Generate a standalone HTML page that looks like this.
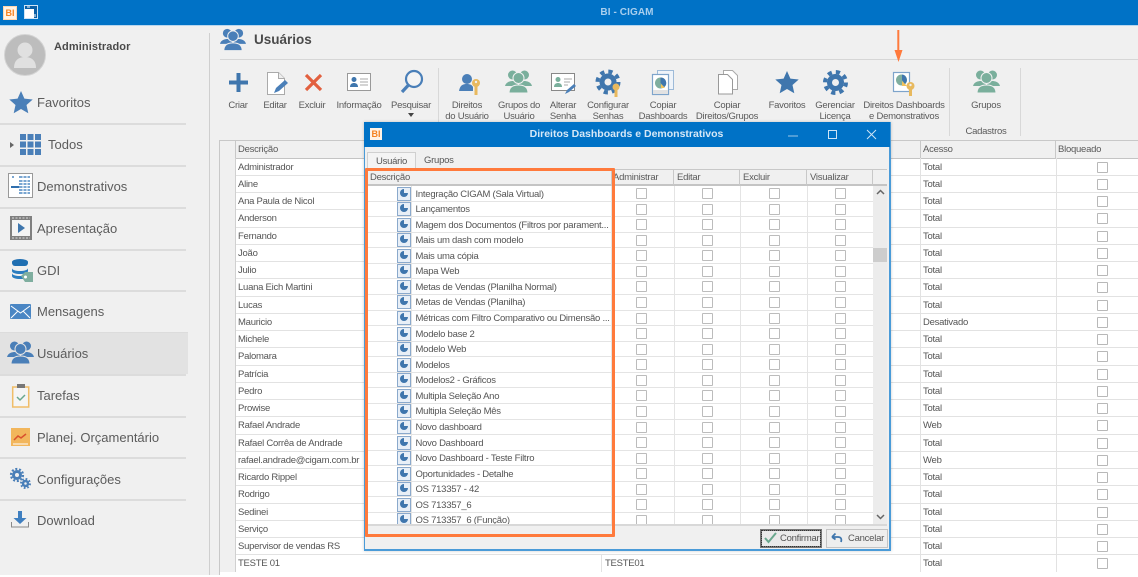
<!DOCTYPE html>
<html><head><meta charset="utf-8"><title>BI - CIGAM</title>
<style>
html,body{margin:0;padding:0;background:#fff;}
#p{position:relative;width:1138px;height:577px;overflow:hidden;background:#fff;font-family:"Liberation Sans",sans-serif;color:#555;filter:blur(.35px);}
#p div,#p span{position:absolute;white-space:nowrap;}
svg{position:absolute;overflow:visible;}
.nav{left:37px;margin-top:1px;font-size:13px;color:#5c5c5c;line-height:18px;}
.sep{left:0;width:186px;height:2px;background:#dcdcdc;}
.tb{margin-top:2px;font-size:9.5px;letter-spacing:-.25px;line-height:10.5px;text-align:center;width:110px;color:#5a5a5a;white-space:normal !important;}
.vs{width:1px;background:#d8d8d8;top:68px;height:68px;}
.r{left:220px;width:918px;height:17.25px;background:#fff;border-bottom:1px solid #e2e2e2;box-sizing:border-box;font-size:9.5px;letter-spacing:-.25px;line-height:16px;color:#555;}
.r .a{left:18px;top:1px;}.r .c{left:703px;top:1px;}.r .x{left:381px;top:-1px;width:0;height:18px;border-left:1px solid #e2e2e2;}
.r .y{left:836px;top:-1px;width:0;height:18px;border-left:1px solid #e2e2e2;}.r .w{left:700px;top:-1px;width:0;height:18px;border-left:1px solid #e2e2e2;}
.r .z{left:0;top:-1px;width:15px;height:18px;background:#f0f0f0;border-right:1px solid #d0d0d0;}
.r i{position:absolute;left:877px;top:3px;width:9px;height:9px;border:1px solid #b8b8b8;border-radius:1px;background:#fff;}
.h{top:141px;height:17px;background:#f0f0f0;border-right:1px solid #c8c8c8;border-bottom:2px solid #c4c4c4;box-sizing:content-box;font-size:9.5px;letter-spacing:-.25px;line-height:18px;color:#5a5a5a;text-indent:2px;}
.dh{top:169px;height:15px;background:#f0f0f0;border-right:1px solid #c8c8c8;border-bottom:2px solid #c4c4c4;font-size:9.5px;letter-spacing:-.25px;line-height:16px;color:#5a5a5a;text-indent:3px;}
.dr{left:0;width:506px;height:15.57px;background:#fff;border-bottom:1px solid #e4e4e4;box-sizing:border-box;font-size:9.5px;letter-spacing:-.25px;line-height:14.5px;color:#555;}
.dr b{position:absolute;font-weight:normal;left:48.5px;top:1.5px;white-space:nowrap;}
.dr u{position:absolute;left:30px;top:.5px;width:12px;height:12px;background:#e8eff7;border:1px solid #8aa9cc;text-decoration:none;}
.dr u:before{content:"";position:absolute;left:2px;top:1px;width:8px;height:8px;border-radius:50%;background:#3f76ad;}
.dr u:after{content:"";position:absolute;left:6px;top:1px;width:4px;height:4px;background:#e8eff7;}
.dr s{position:absolute;top:2px;width:9px;height:9px;border:1px solid #bcbcbc;border-radius:1px;background:#fff;}
.dr em{position:absolute;top:0;height:16px;width:1px;background:#e4e4e4;}
</style></head><body>
<div id="p">
<div style="left:0;top:0;width:1138px;height:575px;background:#f0f0f0"></div>
<div style="left:0;top:0;width:1138px;height:25px;background:#0072c6"></div>
<div style="left:0;top:25px;width:1138px;height:1px;background:#b8d6ee"></div>
<div style="left:0;top:4px;width:1254px;text-align:center;color:#a9cfee;font-size:10px;font-weight:bold;line-height:18px;letter-spacing:.1px">BI - CIGAM</div>

<div style="left:3px;top:6px;width:12px;height:12px;background:#fff3e6;border:1px solid #ffd7b0;color:#f58220;font:bold 9px/12px 'Liberation Sans';text-align:center">BI</div>
<svg style="left:24px;top:5px" width="14" height="14"><rect width="13" height="13" fill="#0a5fa5" stroke="#cfe4f5" stroke-width="1" x=".5" y=".5"/><rect x="1" y="4" width="9" height="9" fill="#fff"/><path d="M3 2h3M11 9v3" stroke="#fff"/></svg>

<!-- sidebar -->
<div style="left:209px;top:33px;width:1px;height:542px;background:#cfcfcf"></div>
<svg style="left:4px;top:34px" width="43" height="42"><circle cx="21" cy="21" r="20.5" fill="#bdbdbd" stroke="#d4d4d4"/><circle cx="21" cy="16" r="7.5" fill="#e0e0e0"/><path d="M10 34c0-8 5-11 11-11s11 3 11 11z" fill="#e0e0e0"/></svg>
<div style="left:54px;top:40px;font-size:11px;font-weight:bold;color:#4a4a4a;line-height:15px;letter-spacing:.1px">Administrador</div>

<svg style="left:9px;top:91px" width="24" height="23"><path d="M12 0l3.4 7.6 8.3.9-6.2 5.5 1.800 8.200L12 18l-7.300 4.200 1.800-8.200L.3 8.500l8.300-.9z" fill="#4a7fb8"/></svg>
<div class="nav" style="top:93px">Favoritos</div>
<div class="sep" style="top:123px"></div>
<svg style="left:9px;top:141px" width="6" height="8"><path d="M1 1l4 3-4 3z" fill="#666"/></svg>
<svg style="left:20px;top:134px" width="22" height="21" fill="#4a7fb8"><rect width="6" height="6"/><rect x="7.5" width="6" height="6"/><rect x="15" width="6" height="6"/><rect y="7.5" width="6" height="6"/><rect x="7.5" y="7.5" width="6" height="6"/><rect x="15" y="7.5" width="6" height="6"/><rect y="15" width="6" height="6"/><rect x="7.5" y="15" width="6" height="6"/><rect x="15" y="15" width="6" height="6"/></svg>
<div class="nav" style="left:48px;top:135px">Todos</div>
<div class="sep" style="top:165px"></div>
<svg style="left:8px;top:173px" width="25" height="26"><rect x=".5" y=".5" width="24" height="24" fill="#fff" stroke="#999"/><path d="M5 3v2M11 4h11M11 8h11M11 11h11M3 14h19M11 17h11M11 20h11" stroke="#7aa6d1" stroke-width="2"/><path d="M15 3v18M19 3v18" stroke="#fff"/><path d="M3 14h8" stroke="#2f6fae" stroke-width="2"/></svg>
<div class="nav" style="top:177px">Demonstrativos</div>
<div class="sep" style="top:207px"></div>
<svg style="left:10px;top:216px" width="23" height="25"><rect x="0" y="0" width="22" height="24" fill="#808080"/><rect x="2" y="4" width="18" height="16" fill="#f4f4f4"/><path d="M2 2h18M2 22h18" stroke="#ddd" stroke-dasharray="2 1.5"/><path d="M8 7l7 5-7 5z" fill="#3f76ad"/></svg>
<div class="nav" style="left:37px;top:219px">Apresentação</div>
<div class="sep" style="top:249px"></div>
<svg style="left:12px;top:259px" width="22" height="24"><rect y="1" width="16" height="6" rx="3" fill="#1f6fb2"/><ellipse cx="8" cy="3" rx="8" ry="3" fill="#1f6fb2"/><path d="M0 9c0 2 4 3 8 3s8-1 8-3v3c0 2-4 3-8 3s-8-1-8-3z" fill="#2b7dbf"/><path d="M0 14c0 2 4 3 8 3 2 0 3 0 4-1v4H8c-4 0-8-1-8-3z" fill="#2b7dbf"/><path d="M9 17l4-4h8v10h-8z" fill="#7fae9f"/><circle cx="13.5" cy="18" r="1.5" fill="#fff"/></svg>
<div class="nav" style="top:261px">GDI</div>
<div class="sep" style="top:290px"></div>
<svg style="left:10px;top:304px" width="21" height="15"><rect width="21" height="15" rx="1" fill="#4a86c4"/><path d="M1 2l9.500 7L20 2M1 14l7-7M20 14l-7-7" stroke="#fff" fill="none"/></svg>
<div class="nav" style="top:302px">Mensagens</div>
<div class="sep" style="top:332px;width:188px"></div>
<div style="left:0;top:333px;width:188px;height:41px;background:#e2e2e2"></div>
<svg style="left:7px;top:341px" width="27" height="23" viewBox="0 0 27 23" fill="#4a7fb8"><circle cx="7.500" cy="5" r="4.500"/><circle cx="19.500" cy="5" r="4.500"/><path d="M0 16c1-4 5-5 8-5 3 0 5 2 5 5zM27 16c-1-4-5-5-8-5-3 0-5 2-5 5z"/><circle cx="13.500" cy="8" r="5.500" stroke="#e2e2e2"/><path d="M4 23c0-6 4-8 9.500-8S23 17 23 23z" stroke="#e2e2e2"/></svg>
<div class="nav" style="top:344px">Usuários</div>
<div class="sep" style="top:374px"></div>
<svg style="left:12px;top:384px" width="18" height="24"><rect x=".7" y="3" width="16" height="20" fill="#f5f5f5" stroke="#f0bd68" stroke-width="1.500"/><rect x="5" y="0" width="8" height="4" fill="#777"/><path d="M5 13l3 3 5-5" stroke="#6aa88e" stroke-width="1.500" fill="none"/></svg>
<div class="nav" style="top:386px">Tarefas</div>
<div class="sep" style="top:416px"></div>
<svg style="left:11px;top:428px" width="19" height="18"><rect width="19" height="18" fill="#f2b65c"/><path d="M2 16h15" stroke="#fff"/><path d="M3 12l4-4 3 2 5-4" stroke="#d9502e" stroke-width="1.500" fill="none"/></svg>
<div class="nav" style="top:428px">Planej. Orçamentário</div>
<div class="sep" style="top:457px"></div>
<svg style="left:10px;top:468px" width="21" height="21"><g fill="none" stroke="#4a7fb8"><circle cx="7" cy="7" r="3.500" stroke-width="3"/><circle cx="7" cy="7" r="6" stroke-width="2.200" stroke-dasharray="2 1.770"/><circle cx="15.500" cy="15.500" r="2.500" stroke-width="2.500"/><circle cx="15.500" cy="15.500" r="4.500" stroke-width="2" stroke-dasharray="1.700 1.830"/></g></svg>
<div class="nav" style="top:470px">Configurações</div>
<div class="sep" style="top:499px"></div>
<svg style="left:11px;top:511px" width="18" height="17"><path d="M7 0h4v7h4.500L9 13 2.500 7H7z" fill="#3f7fc0"/><path d="M.5 11v5h17v-5" stroke="#8a8a8a" fill="none"/></svg>
<div class="nav" style="top:511px">Download</div>

<!-- header -->
<svg style="left:220px;top:28px" width="26" height="23" viewBox="0 0 27 23" fill="#4a7fb8"><circle cx="7.500" cy="5" r="4.500"/><circle cx="19.500" cy="5" r="4.500"/><path d="M0 16c1-4 5-5 8-5 3 0 5 2 5 5zM27 16c-1-4-5-5-8-5-3 0-5 2-5 5z"/><circle cx="13.500" cy="8" r="5.500" stroke="#f0f0f0"/><path d="M4 23c0-6 4-8 9.500-8S23 17 23 23z" stroke="#f0f0f0"/></svg>
<div style="left:254px;top:31px;font-size:13.5px;font-weight:bold;color:#4a4a4a;line-height:18px">Usuários</div>
<div style="left:220px;top:59px;width:918px;height:1px;background:#d6d6d6"></div>

<!-- toolbar icons -->
<svg style="left:229px;top:73px" width="19" height="19"><path d="M7.500 0h4v7.500H19v4h-7.500V19h-4v-7.500H0v-4h7.500z" fill="#3f76ad"/></svg>
<svg style="left:267px;top:72px" width="22" height="24"><path d="M.5.500h11l6 6v16H.5z" fill="#fff" stroke="#aaa"/><path d="M11.500.500v6h6" fill="#eee" stroke="#aaa"/><path d="M7 21l2-5 9-8 3 3-9 8z" fill="#4a7fb8"/></svg>
<svg style="left:304px;top:73px" width="19" height="19"><path d="M2 2l15 15M17 2L2 17" stroke="#e2603f" stroke-width="3.200"/></svg>
<svg style="left:347px;top:73px" width="24" height="18"><rect x=".5" y=".5" width="23" height="17" fill="#fff" stroke="#999"/><circle cx="7" cy="6.500" r="2.500" fill="#3f76ad"/><path d="M3 14c0-3 2-4 4-4s4 1 4 4z" fill="#3f76ad"/><path d="M13 6h8M13 9h8M13 12h8" stroke="#aaa"/></svg>
<svg style="left:400px;top:70px" width="24" height="24"><circle cx="14" cy="9" r="8" fill="#fff" fill-opacity=".3" stroke="#4a7fb8" stroke-width="2.200"/><path d="M8.500 15L2 22" stroke="#4a7fb8" stroke-width="3.200"/></svg>
<svg style="left:408px;top:113px" width="6" height="4"><path d="M0 0h6L3 4z" fill="#444"/></svg>
<div class="vs" style="left:438px"></div>
<svg style="left:458px;top:73px" width="24" height="24"><circle cx="9" cy="6" r="5" fill="#4a7fb8"/><path d="M1 18c1-6 4-7 8-7 3 0 5 1 6 3v4z" fill="#4a7fb8"/><circle cx="18" cy="10" r="4" fill="#e8b95e"/><rect x="16.500" y="13" width="3" height="9" fill="#e8b95e"/><circle cx="18" cy="9" r="1.200" fill="#f0f0f0"/></svg>
<svg style="left:505px;top:70px" width="27" height="23" viewBox="0 0 27 23" fill="#7aaf9c"><circle cx="7.500" cy="5" r="4.500"/><circle cx="19.500" cy="5" r="4.500"/><path d="M0 16c1-4 5-5 8-5 3 0 5 2 5 5zM27 16c-1-4-5-5-8-5-3 0-5 2-5 5z"/><circle cx="13.500" cy="8" r="5.500" stroke="#f0f0f0"/><path d="M4 23c0-6 4-8 9.500-8S23 17 23 23z" stroke="#f0f0f0"/></svg>
<svg style="left:551px;top:73px" width="26" height="24"><rect x=".5" y=".5" width="23" height="17" fill="#fff" stroke="#888"/><circle cx="7" cy="6.500" r="2.500" fill="#7aaf9c"/><path d="M3 14c0-3 2-4 4-4s4 1 4 4z" fill="#7aaf9c"/><path d="M13 6h8M13 9h6M13 12h4" stroke="#aaa"/><path d="M14 21l2-4 7-6 2 2-7 6z" fill="#4a7fb8"/></svg>
<svg style="left:596px;top:70px" width="26" height="28"><circle cx="12" cy="12" r="6" fill="none" stroke="#3f76ad" stroke-width="5"/><circle cx="12" cy="12" r="10.500" fill="none" stroke="#3f76ad" stroke-width="4" stroke-dasharray="4.200 4.050"/><circle cx="20" cy="17" r="3.500" fill="#e8b95e"/><rect x="18.500" y="19" width="3" height="8" fill="#e8b95e"/></svg>
<svg style="left:652px;top:70px" width="23" height="25"><rect x="5.500" y=".5" width="16" height="19" fill="#eef3f9" stroke="#9dbad8"/><rect x=".5" y="4.500" width="16" height="20" fill="#fff" stroke="#7ea4cb" stroke-width="1.200"/><circle cx="8.500" cy="13" r="5.500" fill="#7fae9f"/><path d="M8.500 13V7.500a5.500 5.500 0 0 1 4 9.500z" fill="#3f76ad"/><path d="M9 14l4 4H9z" fill="#f2c25c"/><rect x="1" y="20" width="15" height="4" fill="#e2e2e2"/></svg>
<svg style="left:717px;top:70px" width="22" height="25"><path d="M6.500.500h9l5 5v14h-14z" fill="#fff" stroke="#aaa"/><path d="M1.500 4.500h9l5 5v14.500h-14z" fill="#fff" stroke="#999"/></svg>
<svg style="left:775px;top:71px" width="24" height="23"><path d="M12 0l3.400 7.600 8.300.9-6.200 5.500 1.800 8.200L12 18l-7.300 4.200 1.800-8.200L.3 8.500l8.300-.9z" fill="#3f76ad"/></svg>
<svg style="left:823px;top:70px" width="25" height="25"><circle cx="12.500" cy="12.500" r="6" fill="none" stroke="#3f76ad" stroke-width="5"/><circle cx="12.500" cy="12.500" r="10.500" fill="none" stroke="#3f76ad" stroke-width="4" stroke-dasharray="4.200 4.050"/></svg>
<svg style="left:893px;top:72px" width="24" height="25"><rect x=".5" y=".5" width="16" height="19" fill="#fff" stroke="#7ea4cb" stroke-width="1.200"/><circle cx="8.500" cy="8" r="5.500" fill="#7fae9f"/><path d="M9 8V2.500a5.500 5.500 0 0 1 3 9.500z" fill="#3f76ad"/><path d="M9 9l5 5H9z" fill="#f2c25c"/><circle cx="17.500" cy="14" r="4" fill="#e8b95e"/><circle cx="17.500" cy="13" r="1.200" fill="#f0f0f0"/><rect x="16" y="17" width="3" height="7" fill="#e8b95e"/></svg>
<div class="vs" style="left:949px"></div>
<svg style="left:973px;top:70px" width="27" height="23" viewBox="0 0 27 23" fill="#7aaf9c"><circle cx="7.500" cy="5" r="4.500"/><circle cx="19.500" cy="5" r="4.500"/><path d="M0 16c1-4 5-5 8-5 3 0 5 2 5 5zM27 16c-1-4-5-5-8-5-3 0-5 2-5 5z"/><circle cx="13.500" cy="8" r="5.500" stroke="#f0f0f0"/><path d="M4 23c0-6 4-8 9.500-8S23 17 23 23z" stroke="#f0f0f0"/></svg>
<div class="vs" style="left:1020px"></div>

<!-- toolbar labels -->
<div class="tb" style="left:183px;top:99px">Criar</div>
<div class="tb" style="left:220px;top:99px">Editar</div>
<div class="tb" style="left:257px;top:99px">Excluir</div>
<div class="tb" style="left:304px;top:99px">Informação</div>
<div class="tb" style="left:356px;top:99px">Pesquisar</div>
<div class="tb" style="left:412px;top:99px">Direitos<br>do Usuário</div>
<div class="tb" style="left:464px;top:99px">Grupos do<br>Usuário</div>
<div class="tb" style="left:508px;top:99px">Alterar<br>Senha</div>
<div class="tb" style="left:553px;top:99px">Configurar<br>Senhas</div>
<div class="tb" style="left:608px;top:99px">Copiar<br>Dashboards</div>
<div class="tb" style="left:672px;top:99px">Copiar<br>Direitos/Grupos</div>
<div class="tb" style="left:732px;top:99px">Favoritos</div>
<div class="tb" style="left:780px;top:99px">Gerenciar<br>Licença</div>
<div class="tb" style="left:849px;top:99px">Direitos Dashboards<br>e Demonstrativos</div>
<div class="tb" style="left:931px;top:99px">Grupos</div>
<div class="tb" style="left:931px;top:125px">Cadastros</div>

<svg style="left:891px;top:30px" width="16" height="33"><path d="M7.300 0v22" stroke="#ff7a3c" stroke-width="2"/><path d="M3.500 20h8l-4 12z" fill="#ff7a3c"/></svg>

<!-- main grid -->
<div style="left:219px;top:140px;width:919px;height:1px;background:#c8c8c8"></div>
<div style="left:219px;top:140px;width:1px;height:435px;background:#c8c8c8"></div>
<div class="h" style="left:220px;width:15px"></div>
<div class="h" style="left:236px;width:684px">Descrição</div>
<div class="h" style="left:921px;width:134px">Acesso</div>
<div class="h" style="left:1056px;width:82px;border-right:0">Bloqueado</div>

<div class="r" style="top:158.5px"><span class="a">Administrador</span><span class="c">Total</span><span class="w"></span><span class="y"></span><span class="z"></span><i></i></div>
<div class="r" style="top:175.75px"><span class="a">Aline</span><span class="c">Total</span><span class="w"></span><span class="y"></span><span class="z"></span><i></i></div>
<div class="r" style="top:193px"><span class="a">Ana Paula de Nicol</span><span class="c">Total</span><span class="w"></span><span class="y"></span><span class="z"></span><i></i></div>
<div class="r" style="top:210.25px"><span class="a">Anderson</span><span class="c">Total</span><span class="w"></span><span class="y"></span><span class="z"></span><i></i></div>
<div class="r" style="top:227.5px"><span class="a">Fernando</span><span class="c">Total</span><span class="w"></span><span class="y"></span><span class="z"></span><i></i></div>
<div class="r" style="top:244.75px"><span class="a">João</span><span class="c">Total</span><span class="w"></span><span class="y"></span><span class="z"></span><i></i></div>
<div class="r" style="top:262px"><span class="a">Julio</span><span class="c">Total</span><span class="w"></span><span class="y"></span><span class="z"></span><i></i></div>
<div class="r" style="top:279.25px"><span class="a">Luana Eich Martini</span><span class="c">Total</span><span class="w"></span><span class="y"></span><span class="z"></span><i></i></div>
<div class="r" style="top:296.5px"><span class="a">Lucas</span><span class="c">Total</span><span class="w"></span><span class="y"></span><span class="z"></span><i></i></div>
<div class="r" style="top:313.75px"><span class="a">Mauricio</span><span class="c">Desativado</span><span class="w"></span><span class="y"></span><span class="z"></span><i></i></div>
<div class="r" style="top:331px"><span class="a">Michele</span><span class="c">Total</span><span class="w"></span><span class="y"></span><span class="z"></span><i></i></div>
<div class="r" style="top:348.25px"><span class="a">Palomara</span><span class="c">Total</span><span class="w"></span><span class="y"></span><span class="z"></span><i></i></div>
<div class="r" style="top:365.5px"><span class="a">Patrícia</span><span class="c">Total</span><span class="w"></span><span class="y"></span><span class="z"></span><i></i></div>
<div class="r" style="top:382.75px"><span class="a">Pedro</span><span class="c">Total</span><span class="w"></span><span class="y"></span><span class="z"></span><i></i></div>
<div class="r" style="top:400px"><span class="a">Prowise</span><span class="c">Total</span><span class="w"></span><span class="y"></span><span class="z"></span><i></i></div>
<div class="r" style="top:417.25px"><span class="a">Rafael Andrade</span><span class="c">Web</span><span class="w"></span><span class="y"></span><span class="z"></span><i></i></div>
<div class="r" style="top:434.5px"><span class="a">Rafael Corrêa de Andrade</span><span class="c">Total</span><span class="w"></span><span class="y"></span><span class="z"></span><i></i></div>
<div class="r" style="top:451.75px"><span class="a">rafael.andrade@cigam.com.br</span><span class="c">Web</span><span class="w"></span><span class="y"></span><span class="z"></span><i></i></div>
<div class="r" style="top:469px"><span class="a">Ricardo Rippel</span><span class="c">Total</span><span class="w"></span><span class="y"></span><span class="z"></span><i></i></div>
<div class="r" style="top:486.25px"><span class="a">Rodrigo</span><span class="c">Total</span><span class="w"></span><span class="y"></span><span class="z"></span><i></i></div>
<div class="r" style="top:503.5px"><span class="a">Sedinei</span><span class="c">Total</span><span class="w"></span><span class="y"></span><span class="z"></span><i></i></div>
<div class="r" style="top:520.75px"><span class="a">Serviço</span><span class="c">Total</span><span class="w"></span><span class="y"></span><span class="z"></span><i></i></div>
<div class="r" style="top:538px"><span class="a">Supervisor de vendas RS</span><span class="c">Total</span><span class="w"></span><span class="y"></span><span class="z"></span><i></i></div>
<div class="r" style="top:555.25px;height:19.75px;border-bottom:0"><span class="a">TESTE 01</span><span class="x"></span><span style="left:385px;top:1px">TESTE01</span><span class="c">Total</span><span class="w"></span><span class="y"></span><span class="z"></span><i></i></div>

<!-- dialog -->
<div style="left:364px;top:122px;width:524px;height:426px;background:#f0f0f0;border:1px solid #4a9bd8;border-width:1px 2px 2px 1px;box-shadow:0 0 3px rgba(0,0,0,.2)"></div>
<div style="left:364px;top:122px;width:526px;height:25px;background:#0072c6"></div>
<div style="left:370px;top:128px;width:12px;height:12px;background:#fff3e6;color:#f58220;font:bold 9px/12px 'Liberation Sans';text-align:center">BI</div>
<div style="left:364px;top:125px;width:525px;text-align:center;color:#d6e8f7;font-size:10.5px;font-weight:bold;line-height:18px">Direitos Dashboards e Demonstrativos</div>
<svg style="left:786px;top:127px" width="95" height="16"><path d="M2 9h10" stroke="#9cc5e6"/><rect x="42.500" y="3.500" width="8" height="8" fill="none" stroke="#cfe4f5"/><path d="M81 3l9 9M90 3l-9 9" stroke="#cfe4f5"/></svg>

<div style="left:367px;top:152px;width:47px;height:17px;background:#f4f4f4;border:1px solid #d0d0d0;border-bottom:0;font-size:9.5px;letter-spacing:-.25px;line-height:17px;text-align:center;color:#555">Usuário</div>
<div style="left:424px;top:154px;font-size:9.5px;letter-spacing:-.25px;line-height:13px;color:#555">Grupos</div>

<div style="left:367px;top:169px;width:520px;height:1px;background:#c8c8c8"></div>
<div class="dh" style="left:367px;width:244px;top:170px;height:14px">Descrição</div>
<div class="dh" style="left:612px;width:61px;top:170px;height:14px;text-indent:1px">Administrar</div>
<div class="dh" style="left:674px;width:65px;top:170px;height:14px">Editar</div>
<div class="dh" style="left:740px;width:66px;top:170px;height:14px">Excluir</div>
<div class="dh" style="left:807px;width:65px;top:170px;height:14px">Visualizar</div>
<div class="dh" style="left:873px;width:14px;top:170px;height:14px;border-right:0"></div>

<div style="left:367px;top:186px;width:506px;height:338px;overflow:hidden;background:#fff">
<div class="dr" style="top:0"><u></u><b>Integração CIGAM (Sala Virtual)</b><em style="left:44px"></em><em style="left:244px"></em><em style="left:307px"></em><em style="left:373px"></em><em style="left:440px"></em><s style="left:269px"></s><s style="left:335px"></s><s style="left:402px"></s><s style="left:468px"></s></div>
<div class="dr" style="top:15.57px"><u></u><b>Lançamentos</b><em style="left:44px"></em><em style="left:244px"></em><em style="left:307px"></em><em style="left:373px"></em><em style="left:440px"></em><s style="left:269px"></s><s style="left:335px"></s><s style="left:402px"></s><s style="left:468px"></s></div>
<div class="dr" style="top:31.14px"><u></u><b>Magem dos Documentos (Filtros por parament...</b><em style="left:44px"></em><em style="left:244px"></em><em style="left:307px"></em><em style="left:373px"></em><em style="left:440px"></em><s style="left:269px"></s><s style="left:335px"></s><s style="left:402px"></s><s style="left:468px"></s></div>
<div class="dr" style="top:46.71px"><u></u><b>Mais um dash com modelo</b><em style="left:44px"></em><em style="left:244px"></em><em style="left:307px"></em><em style="left:373px"></em><em style="left:440px"></em><s style="left:269px"></s><s style="left:335px"></s><s style="left:402px"></s><s style="left:468px"></s></div>
<div class="dr" style="top:62.28px"><u></u><b>Mais uma cópia</b><em style="left:44px"></em><em style="left:244px"></em><em style="left:307px"></em><em style="left:373px"></em><em style="left:440px"></em><s style="left:269px"></s><s style="left:335px"></s><s style="left:402px"></s><s style="left:468px"></s></div>
<div class="dr" style="top:77.85px"><u></u><b>Mapa Web</b><em style="left:44px"></em><em style="left:244px"></em><em style="left:307px"></em><em style="left:373px"></em><em style="left:440px"></em><s style="left:269px"></s><s style="left:335px"></s><s style="left:402px"></s><s style="left:468px"></s></div>
<div class="dr" style="top:93.42px"><u></u><b>Metas de Vendas (Planilha Normal)</b><em style="left:44px"></em><em style="left:244px"></em><em style="left:307px"></em><em style="left:373px"></em><em style="left:440px"></em><s style="left:269px"></s><s style="left:335px"></s><s style="left:402px"></s><s style="left:468px"></s></div>
<div class="dr" style="top:108.99px"><u></u><b>Metas de Vendas (Planilha)</b><em style="left:44px"></em><em style="left:244px"></em><em style="left:307px"></em><em style="left:373px"></em><em style="left:440px"></em><s style="left:269px"></s><s style="left:335px"></s><s style="left:402px"></s><s style="left:468px"></s></div>
<div class="dr" style="top:124.56px"><u></u><b>Métricas com Filtro Comparativo ou Dimensão ...</b><em style="left:44px"></em><em style="left:244px"></em><em style="left:307px"></em><em style="left:373px"></em><em style="left:440px"></em><s style="left:269px"></s><s style="left:335px"></s><s style="left:402px"></s><s style="left:468px"></s></div>
<div class="dr" style="top:140.13px"><u></u><b>Modelo base 2</b><em style="left:44px"></em><em style="left:244px"></em><em style="left:307px"></em><em style="left:373px"></em><em style="left:440px"></em><s style="left:269px"></s><s style="left:335px"></s><s style="left:402px"></s><s style="left:468px"></s></div>
<div class="dr" style="top:155.7px"><u></u><b>Modelo Web</b><em style="left:44px"></em><em style="left:244px"></em><em style="left:307px"></em><em style="left:373px"></em><em style="left:440px"></em><s style="left:269px"></s><s style="left:335px"></s><s style="left:402px"></s><s style="left:468px"></s></div>
<div class="dr" style="top:171.27px"><u></u><b>Modelos</b><em style="left:44px"></em><em style="left:244px"></em><em style="left:307px"></em><em style="left:373px"></em><em style="left:440px"></em><s style="left:269px"></s><s style="left:335px"></s><s style="left:402px"></s><s style="left:468px"></s></div>
<div class="dr" style="top:186.84px"><u></u><b>Modelos2 - Gráficos</b><em style="left:44px"></em><em style="left:244px"></em><em style="left:307px"></em><em style="left:373px"></em><em style="left:440px"></em><s style="left:269px"></s><s style="left:335px"></s><s style="left:402px"></s><s style="left:468px"></s></div>
<div class="dr" style="top:202.41px"><u></u><b>Multipla Seleção Ano</b><em style="left:44px"></em><em style="left:244px"></em><em style="left:307px"></em><em style="left:373px"></em><em style="left:440px"></em><s style="left:269px"></s><s style="left:335px"></s><s style="left:402px"></s><s style="left:468px"></s></div>
<div class="dr" style="top:217.98px"><u></u><b>Multipla Seleção Mês</b><em style="left:44px"></em><em style="left:244px"></em><em style="left:307px"></em><em style="left:373px"></em><em style="left:440px"></em><s style="left:269px"></s><s style="left:335px"></s><s style="left:402px"></s><s style="left:468px"></s></div>
<div class="dr" style="top:233.55px"><u></u><b>Novo dashboard</b><em style="left:44px"></em><em style="left:244px"></em><em style="left:307px"></em><em style="left:373px"></em><em style="left:440px"></em><s style="left:269px"></s><s style="left:335px"></s><s style="left:402px"></s><s style="left:468px"></s></div>
<div class="dr" style="top:249.12px"><u></u><b>Novo Dashboard</b><em style="left:44px"></em><em style="left:244px"></em><em style="left:307px"></em><em style="left:373px"></em><em style="left:440px"></em><s style="left:269px"></s><s style="left:335px"></s><s style="left:402px"></s><s style="left:468px"></s></div>
<div class="dr" style="top:264.69px"><u></u><b>Novo Dashboard - Teste Filtro</b><em style="left:44px"></em><em style="left:244px"></em><em style="left:307px"></em><em style="left:373px"></em><em style="left:440px"></em><s style="left:269px"></s><s style="left:335px"></s><s style="left:402px"></s><s style="left:468px"></s></div>
<div class="dr" style="top:280.26px"><u></u><b>Oportunidades - Detalhe</b><em style="left:44px"></em><em style="left:244px"></em><em style="left:307px"></em><em style="left:373px"></em><em style="left:440px"></em><s style="left:269px"></s><s style="left:335px"></s><s style="left:402px"></s><s style="left:468px"></s></div>
<div class="dr" style="top:295.83px"><u></u><b>OS 713357 - 42</b><em style="left:44px"></em><em style="left:244px"></em><em style="left:307px"></em><em style="left:373px"></em><em style="left:440px"></em><s style="left:269px"></s><s style="left:335px"></s><s style="left:402px"></s><s style="left:468px"></s></div>
<div class="dr" style="top:311.4px"><u></u><b>OS 713357_6</b><em style="left:44px"></em><em style="left:244px"></em><em style="left:307px"></em><em style="left:373px"></em><em style="left:440px"></em><s style="left:269px"></s><s style="left:335px"></s><s style="left:402px"></s><s style="left:468px"></s></div>
<div class="dr" style="top:326.97px"><u></u><b>OS 713357_6 (Função)</b><em style="left:44px"></em><em style="left:244px"></em><em style="left:307px"></em><em style="left:373px"></em><em style="left:440px"></em><s style="left:269px"></s><s style="left:335px"></s><s style="left:402px"></s><s style="left:468px"></s></div>
</div>
<div style="left:367px;top:524px;width:520px;height:2px;background:#d8d8d8"></div>

<!-- scrollbar -->
<div style="left:873px;top:186px;width:14px;height:338px;background:#ececec"></div>
<div style="left:873px;top:248px;width:14px;height:14px;background:#cdcdcd"></div>
<svg style="left:876px;top:189px" width="9" height="6"><path d="M1 5l3.500-3.500L8 5" stroke="#666" stroke-width="1.500" fill="none"/></svg>
<svg style="left:876px;top:514px" width="9" height="6"><path d="M1 1l3.500 3.500L8 1" stroke="#666" stroke-width="1.500" fill="none"/></svg>

<!-- orange annotation -->
<div style="left:365px;top:168px;width:244px;height:363px;border:3px solid #ff7a3c;border-radius:1px"></div>

<!-- buttons -->
<div style="left:760px;top:529px;width:58px;height:15px;border:2px solid #777;background:#eaeaea;outline:1px dotted #333;outline-offset:-2px;font-size:9.5px;letter-spacing:-.25px;line-height:15px;color:#555;text-indent:18px">Confirmar</div>
<svg style="left:764px;top:532px" width="13" height="11"><path d="M1 6l3.500 4L12 1" stroke="#6aa88e" stroke-width="2" fill="none"/></svg>
<div style="left:826px;top:529px;width:60px;height:17px;border:1px solid #c4c4c4;background:#eee;font-size:9.5px;letter-spacing:-.25px;line-height:17px;color:#555;text-indent:21px">Cancelar</div>
<svg style="left:830px;top:532px" width="13" height="11"><path d="M2 5h6c3 0 4 2 3 5M2 5l3.500-3.500M2 5l3.500 2.500" stroke="#3f76ad" stroke-width="1.700" fill="none"/></svg>
</div>
</body></html>
